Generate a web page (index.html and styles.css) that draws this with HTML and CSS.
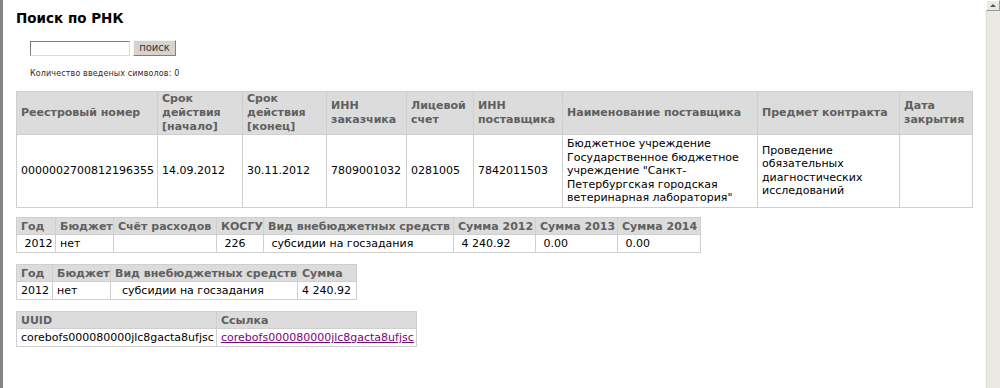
FILE: index.html
```html
<!DOCTYPE html>
<html lang="ru">
<head>
<meta charset="utf-8">
<title>Поиск по РНК</title>
<link rel="stylesheet" href="styles.css">
</head>
<body>
<div class="window">
  <div class="page">
    <h1 class="title">Поиск по РНК</h1>
    <form class="search">
      <input class="search-input" type="text">
      <button class="search-btn" type="button">поиск</button>
    </form>
    <p class="counter">Количество введеных символов: 0</p>

    <table class="grid grid-main">
      <colgroup>
        <col class="m1"><col class="m2"><col class="m3"><col class="m4"><col class="m5"><col class="m6"><col class="m7"><col class="m8"><col class="m9">
      </colgroup>
      <thead>
        <tr>
          <th>Реестровый номер</th>
          <th>Срок действия [начало]</th>
          <th>Срок действия [конец]</th>
          <th>ИНН заказчика</th>
          <th>Лицевой счет</th>
          <th>ИНН поставщика</th>
          <th>Наименование поставщика</th>
          <th>Предмет контракта</th>
          <th>Дата закрытия</th>
        </tr>
      </thead>
      <tbody>
        <tr class="tall">
          <td>0000002700812196355</td>
          <td>14.09.2012</td>
          <td>30.11.2012</td>
          <td>7809001032</td>
          <td>0281005</td>
          <td>7842011503</td>
          <td>Бюджетное учреждение Государственное бюджетное учреждение "Санкт-Петербургская городская ветеринарная лаборатория"</td>
          <td>Проведение обязательных диагностических исследований</td>
          <td></td>
        </tr>
      </tbody>
    </table>

    <table class="grid grid-small grid-b">
      <colgroup>
        <col class="b1"><col class="b2"><col class="b3"><col class="b4"><col class="b5"><col class="b6"><col class="b7"><col class="b8">
      </colgroup>
      <thead>
        <tr>
          <th>Год</th><th>Бюджет</th><th>Счёт расходов</th><th>КОСГУ</th><th>Вид внебюджетных средств</th><th>Сумма 2012</th><th>Сумма 2013</th><th>Сумма 2014</th>
        </tr>
      </thead>
      <tbody>
        <tr>
          <td>&nbsp;2012</td><td>нет</td><td></td><td>&nbsp;226</td><td>&nbsp;субсидии на госзадания</td><td>&nbsp;4 240.92</td><td>&nbsp;0.00</td><td>&nbsp;0.00</td>
        </tr>
      </tbody>
    </table>

    <table class="grid grid-small grid-c">
      <colgroup>
        <col class="c1"><col class="c2"><col class="c3"><col class="c4">
      </colgroup>
      <thead>
        <tr><th>Год</th><th>Бюджет</th><th>Вид внебюджетных средств</th><th>Сумма</th></tr>
      </thead>
      <tbody>
        <tr><td>2012</td><td>нет</td><td>&nbsp;&nbsp;субсидии на госзадания</td><td>4 240.92</td></tr>
      </tbody>
    </table>

    <table class="grid grid-small grid-d">
      <colgroup>
        <col class="d1"><col class="d2">
      </colgroup>
      <thead>
        <tr><th>UUID</th><th>Ссылка</th></tr>
      </thead>
      <tbody>
        <tr><td>corebofs000080000jlc8gacta8ufjsc</td><td><a class="link" href="#">corebofs000080000jlc8gacta8ufjsc</a></td></tr>
      </tbody>
    </table>
  </div>
  <div class="scrollbar">
    <div class="scroll-up"><span class="arrow"></span></div>
    <div class="scroll-track"></div>
  </div>
</div>
</body>
</html>
```

FILE: styles.css
```css
html, body {
  margin: 0;
  padding: 0;
  height: 100%;
  background: #ffffff;
}

body {
  font-family: "DejaVu Sans", Verdana, sans-serif;
  font-size: 11px;
  color: #000;
  overflow: hidden;
}

.window {
  display: flex;
  height: 388px;
}

.page {
  flex: 1;
  border-left: 3px solid #868686;
  padding: 10px 0 0 13px;
}

.title {
  margin: 0 0 14px 0;
  font-size: 13.5px;
  font-weight: bold;
  line-height: 16px;
  color: #000;
}

.search {
  display: flex;
  align-items: center;
  gap: 3px;
  margin: 0 0 0 14px;
}

.search-input {
  width: 100px;
  height: 15px;
  box-sizing: border-box;
  padding: 0;
  margin: 0;
  border: 1px solid;
  border-color: #7a7a7a #dcdcdc #dcdcdc #7a7a7a;
  background: #fff;
}

.search-btn {
  height: 16px;
  width: 43px;
  box-sizing: border-box;
  padding: 0;
  margin: 0;
  font-family: "DejaVu Sans", Verdana, sans-serif;
  font-size: 10px;
  line-height: 12px;
  color: #333;
  background: #d6d3ce;
  border: 1px solid;
  border-color: #f4f4f4 #808080 #808080 #f4f4f4;
}

.counter {
  margin: 13px 0 12px 14px;
  font-size: 8px;
  line-height: 10px;
  letter-spacing: 0.12px;
  color: #3c1f1f;
}

.grid {
  border-collapse: collapse;
  table-layout: fixed;
  line-height: 13.5px;
}

.grid th,
.grid td {
  border: 1px solid #cfcfcf;
  padding: 2px 4px;
  text-align: left;
  vertical-align: middle;
  overflow: hidden;
}

.grid th {
  background: #dcdcdc;
  color: #606060;
  font-weight: bold;
}

.grid td {
  background: #fff;
}

.grid-main {
  width: 956px;
  margin-bottom: 9px;
}

.grid-main th {
  padding: 0 4px;
  line-height: 14px;
}

.grid-main .tall td {
  height: 66px;
}

.m1 { width: 141px; }
.m2 { width: 85px; }
.m3 { width: 84px; }
.m4 { width: 80px; }
.m5 { width: 67px; }
.m6 { width: 89px; }
.m7 { width: 195px; }
.m8 { width: 142px; }
.m9 { width: 73px; }

.grid-small {
  margin-bottom: 11px;
}

.grid-small th,
.grid-small td {
  white-space: nowrap;
  padding: 2px 4px 1px 4px;
}

.grid-b { width: 684px; }
.b1 { width: 39px; }
.b2 { width: 58px; }
.b3 { width: 103px; }
.b4 { width: 47px; }
.b5 { width: 190px; }
.b6 { width: 82px; }
.b7 { width: 82px; }
.b8 { width: 83px; }

.grid-c { width: 340px; }
.c1 { width: 36px; }
.c2 { width: 58px; }
.c3 { width: 187px; }
.c4 { width: 59px; }

.grid-d { width: 400px; }
.d1 { width: 200px; }
.d2 { width: 200px; }

.link {
  color: #800080;
  text-decoration: underline;
}

.scrollbar {
  width: 14px;
  display: flex;
  flex-direction: column;
  background: #ebe9e4;
  border-left: 1px solid #f7f7f5;
}

.scroll-up {
  height: 11px;
  box-sizing: border-box;
  background: #ece9e2;
  border: 1px solid;
  border-color: #ffffff #9a9a9a #9a9a9a #ffffff;
  display: flex;
  align-items: center;
  justify-content: center;
}

.arrow {
  width: 0;
  height: 0;
  border-left: 3px solid transparent;
  border-right: 3px solid transparent;
  border-bottom: 3px solid #555;
}

.scroll-track {
  flex: 1;
  background: #ebe9e4;
  border-left: 1px solid #dedcd6;
}
```
